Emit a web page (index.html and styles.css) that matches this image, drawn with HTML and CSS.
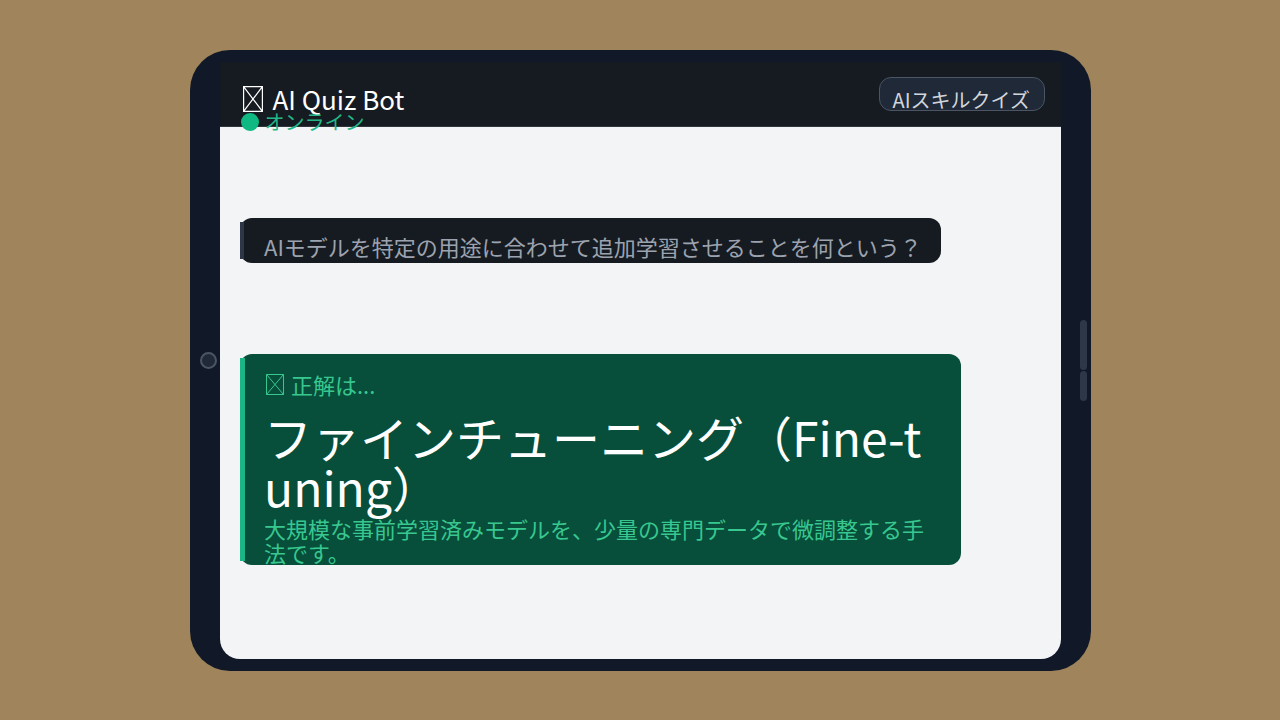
FILE: index.html
```html
<!DOCTYPE html>
<html lang="ja">
<head>
    <meta charset="UTF-8">
    <title>AI Quiz Bot</title>
    <link rel="stylesheet" href="styles.css">
</head>
<body>
    <section class="device">
        <span class="camera"></span>
        <span class="side-btn side-btn-a"></span>
        <span class="side-btn side-btn-b"></span>
        <div class="screen">
            <header class="top">
                <div class="bot">
                    <div class="bot-name">
                        <svg class="tofu tofu-big" viewBox="0 0 20 26" fill="none" stroke="currentColor" stroke-width="1.2"><path d="M.6.6h18.8v24.8H.6zM.6.6l18.8 24.8M19.4.6L.6 25.4"/></svg>
                        AI Quiz Bot
                    </div>
                    <div class="bot-state"><i class="dot"></i>オンライン</div>
                </div>
                <div class="pill">AIスキルクイズ</div>
            </header>
            <main class="chat">
                <div class="question">AIモデルを特定の用途に合わせて追加学習させることを何という？</div>
                <div class="answer">
                    <div class="answer-label">
                        <svg class="tofu tofu-small" viewBox="0 0 18 21" fill="none" stroke="currentColor" stroke-width="1"><path d="M.5.5h17v20H.5zM.5.5l17 20M17.5.5l-17 20"/></svg>
                        正解は...
                    </div>
                    <div class="answer-title">ファインチューニング（Fine-tuning）</div>
                    <div class="answer-desc">大規模な事前学習済みモデルを、少量の専門データで微調整する手法です。</div>
                </div>
            </main>
        </div>
    </section>
</body>
</html>
```

FILE: styles.css
```css
*{
    box-sizing:border-box;
}
html,body{
    margin:0;
    height:100%;
    overflow:hidden;
}
body{
    background:#a0845c;
    display:flex;
    justify-content:center;
    align-items:center;
    font-family:"Noto Sans CJK JP","Noto Sans",sans-serif;
}
.device{
    width:901px;
    height:621px;
    padding:12px 30px;
    background:#111827;
    border-radius:40px;
    position:relative;
}
.camera{
    width:17px;
    height:17px;
    position:absolute;
    left:10px;
    top:302px;
    border:2px solid #4b5563;
    border-radius:50%;
    background:#1f2937;
}
.side-btn{
    width:7px;
    position:absolute;
    right:4px;
    background:#2d3748;
    border-radius:4px;
}
.side-btn-a{
    top:270px;
    height:50px;
}
.side-btn-b{
    top:321px;
    height:30px;
}
.screen{
    height:100%;
    display:flex;
    flex-direction:column;
    background:#f3f4f6;
    border-radius:0 0 20px 20px;
    overflow:hidden;
}
.top{
    height:65px;
    flex:none;
    display:flex;
    justify-content:space-between;
    align-items:flex-start;
    padding:15px 16px 0 21px;
    background:#161b22;
    border-bottom:1px solid #30363d;
}
.bot-name{
    height:44px;
    display:flex;
    align-items:center;
    font-size:26px;
    line-height:46px;
    color:#fff;
}
.tofu{
    flex:none;
}
.tofu-big{
    width:20px;
    height:26px;
    margin:0 10px 0 2px;
}
.bot-state{
    height:10px;
    display:flex;
    align-items:center;
    gap:6px;
    font-size:20px;
    line-height:20px;
    color:#22b687;
    margin-top:-4px;
}
.dot{
    width:18px;
    height:18px;
    flex:none;
    background:#10b981;
    border-radius:50%;
}
.pill{
    width:166px;
    height:34px;
    padding-left:13px;
    background:#1f2937;
    border:1px solid #4b5563;
    border-radius:12px;
    font-size:20px;
    line-height:44px;
    color:#d1d5db;
    overflow:hidden;
}
.chat{
    flex:1;
    padding:91px 20px 0;
}
.question{
    width:701px;
    height:45px;
    padding-left:24.5px;
    background:#161b22;
    border-radius:12px;
    font-size:22px;
    line-height:56px;
    color:#9ca3af;
    white-space:nowrap;
    position:relative;
}
.question:before{
    content:"";
    width:4px;
    position:absolute;
    left:0;
    top:4px;
    bottom:4px;
    background:#2d3748;
}
.answer{
    width:721px;
    height:211px;
    margin-top:91px;
    padding:0 24px 0 24.5px;
    background:#074e3b;
    border-radius:12px;
    position:relative;
}
.answer:before{
    content:"";
    width:5px;
    position:absolute;
    left:0;
    top:4px;
    bottom:4px;
    background:#1cb686;
}
.answer-label{
    display:flex;
    align-items:center;
    height:32px;
    padding-top:14px;
    box-sizing:content-box;
    font-size:22px;
    line-height:32px;
    color:#38c78f;
}
.tofu-small{
    width:18px;
    height:21px;
    margin:2px 7px 0 2px;
}
.answer-title{
    font-size:48px;
    line-height:50px;
    margin:11px 0 5px;
    color:#fff;
    word-break:break-all;
}
.answer-desc{
    font-size:22px;
    line-height:24.5px;
    color:#38c78f;
}
```
